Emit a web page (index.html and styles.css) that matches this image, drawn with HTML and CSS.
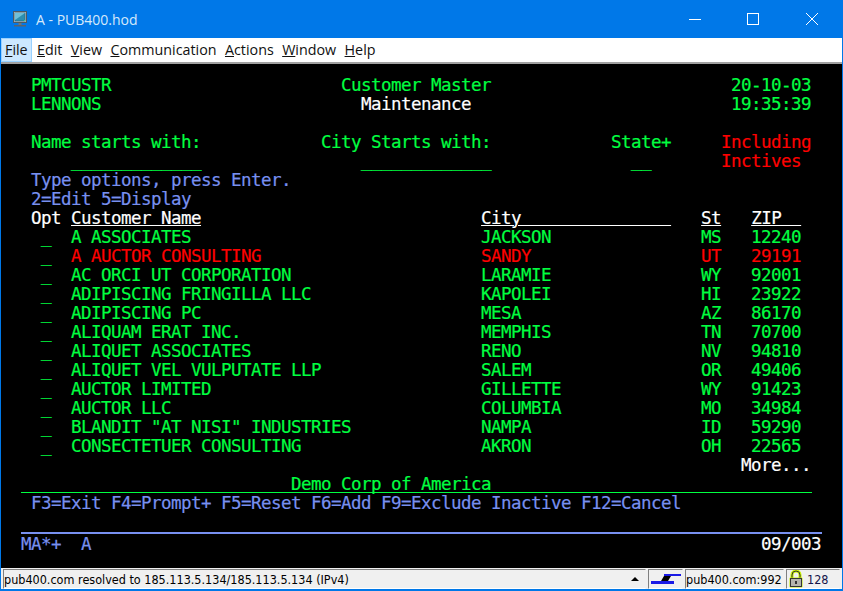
FILE: index.html
```html
<!DOCTYPE html>
<html lang="en">
  <head>
    <meta charset="UTF-8" />
    <title>A - PUB400.hod</title>
    <link rel="stylesheet" href="styles.css">
  </head>
  <body>
    <div class="window">
      <div class="titlebar">
        <svg class="app-icon" width="16" height="16" viewBox="0 0 16 16">
          <rect x="1.500" y="0.500" width="13" height="11" fill="#a9b4ba" stroke="#4d5a63" />
          <rect x="3" y="2" width="10" height="8" fill="#2d8fb0" stroke="#1d5f78" stroke-width="0.5" />
          <path d="M3 2h10L3 9z" fill="#6fc0d8" />
          <rect x="12" y="9" width="1" height="1" fill="#3fe070" />
          <rect x="6.500" y="12" width="3" height="2" fill="#6d777e" />
          <rect x="2" y="14" width="12" height="1.500" fill="#59646c" />
        </svg>
        <span class="title">A - PUB400.hod</span>
        <div class="win-btns">
          <svg class="win-btn" width="12" height="12" viewBox="0 0 12 12"><path d="M0 6.500h12" stroke="#fff" fill="none" /></svg>
          <svg class="win-btn max" width="12" height="12" viewBox="0 0 12 12"><rect x="0.500" y="0.500" width="11" height="11" stroke="#fff" fill="none" /></svg>
          <svg class="win-btn" width="12" height="12" viewBox="0 0 12 12"><path d="M0 0l12 12M12 0L0 12" stroke="#fff" fill="none" /></svg>
        </div>
      </div>

      <ul class="menubar">
        <li class="menu selected"><u>F</u>ile</li>
        <li class="menu"><u>E</u>dit</li>
        <li class="menu"><u>V</u>iew</li>
        <li class="menu"><u>C</u>ommunication</li>
        <li class="menu"><u>A</u>ctions</li>
        <li class="menu"><u>W</u>indow</li>
        <li class="menu"><u>H</u>elp</li>
      </ul>

      <div class="screen">
<pre class="term"><span class="g"> PMTCUSTR                       Customer Master                        20-10-03</span>
<span class="g"> LENNONS</span>                          <span class="w">Maintenance</span>                          <span class="g">19:35:39</span>

<span class="g"> Name starts with:            City Starts with:            State+</span>     <span class="r">Including</span>
<span class="g">     <span class="fld">_____________</span>                <span class="fld">_____________</span>              <span class="fld">__</span></span>       <span class="r">Inctives</span>
<span class="b"> Type options, press Enter.</span>
<span class="b"> 2=Edit 5=Display</span>
<span class="w"> Opt <u>Customer Name</u>                            <u>City               </u>   <u>St</u>   <u>ZIP  </u></span>
<span class="g">  <span class="fld">_</span>  A ASSOCIATES                             JACKSON               MS   12240</span>
<span class="g">  <span class="fld">_</span>  </span><span class="r">A AUCTOR CONSULTING                      SANDY                 UT   29191</span>
<span class="g">  <span class="fld">_</span>  AC ORCI UT CORPORATION                   LARAMIE               WY   92001</span>
<span class="g">  <span class="fld">_</span>  ADIPISCING FRINGILLA LLC                 KAPOLEI               HI   23922</span>
<span class="g">  <span class="fld">_</span>  ADIPISCING PC                            MESA                  AZ   86170</span>
<span class="g">  <span class="fld">_</span>  ALIQUAM ERAT INC.                        MEMPHIS               TN   70700</span>
<span class="g">  <span class="fld">_</span>  ALIQUET ASSOCIATES                       RENO                  NV   94810</span>
<span class="g">  <span class="fld">_</span>  ALIQUET VEL VULPUTATE LLP                SALEM                 OR   49406</span>
<span class="g">  <span class="fld">_</span>  AUCTOR LIMITED                           GILLETTE              WY   91423</span>
<span class="g">  <span class="fld">_</span>  AUCTOR LLC                               COLUMBIA              MO   34984</span>
<span class="g">  <span class="fld">_</span>  BLANDIT "AT NISI" INDUSTRIES             NAMPA                 ID   59290</span>
<span class="g">  <span class="fld">_</span>  CONSECTETUER CONSULTING                  AKRON                 OH   22565</span>
<span class="w">                                                                        More...</span>
<span class="g">                           Demo Corp of America</span></pre>
<pre class="term keys"><span class="b"> F3=Exit F4=Prompt+ F5=Reset F6=Add F9=Exclude Inactive F12=Cancel</span></pre>
<pre class="term oia"><span class="b">MA*+  A</span>                                                                   <span class="w">09/003</span></pre>
      </div>

      <div class="statusbar">
        <div class="panel msg">pub400.com resolved to 185.113.5.134/185.113.5.134 (IPv4)<span class="arrow"></span></div>
        <div class="panel conn">
          <svg width="30" height="10" viewBox="0 0 30 10">
            <path d="M13 2h7l-3 5h-7z" fill="#000" />
            <rect x="13" y="0" width="17" height="2" fill="#1a1ae6" />
            <rect x="0" y="7" width="23" height="3" fill="#1a1ae6" />
          </svg>
        </div>
        <div class="panel host">pub400.com:992</div>
        <div class="panel lock">
          <svg width="14" height="18" viewBox="0 0 14 18">
            <path d="M3 8V5a4 4 0 0 1 8 0v3" fill="none" stroke="#c8f000" stroke-width="3" />
            <path d="M3 8V5a4 4 0 0 1 8 0v3" fill="none" stroke="#333" />
            <rect x="0.500" y="7.500" width="13" height="10" rx="1" fill="#c8f000" />
            <rect x="1.500" y="8.500" width="11" height="8" fill="#b4b4ae" stroke="#333" />
            <path d="M7 11v3" stroke="#333" stroke-width="2" />
          </svg>
          <span class="bits">128</span>
        </div>
      </div>
    </div>
  </body>
</html>
```

FILE: styles.css
```css
* {
  box-sizing: border-box;
}

html,
body {
  margin: 0;
  height: 100%;
}

.window {
  display: flex;
  flex-direction: column;
  width: 843px;
  height: 591px;
  overflow: hidden;
  background: #0078e8;
  padding: 0 1px 2px 1px;
}

.titlebar {
  display: flex;
  align-items: center;
  flex: 0 0 38px;
  padding-left: 11px;
  color: #d5e9fb;
  font-family: "Open Sans", "Noto Sans", sans-serif;
  font-size: 14px;
}

.app-icon {
  margin-right: 8px;
}

.win-btns {
  display: flex;
  margin-left: auto;
  gap: 46px;
  padding-right: 24px;
}

.max {
  margin-right: 1px;
}

.menubar {
  display: flex;
  flex: 0 0 24px;
  align-items: center;
  margin: 0;
  padding: 0;
  list-style-type: none;
  background: #fff;
  font-family: "Open Sans", "Noto Sans", sans-serif;
  font-size: 14.300px;
  color: #111;
}

.menu {
  padding: 2px 4px 2px 4.400px;
  height: 24px;
  line-height: 20px;
}

.selected {
  background: #cce8ff;
  border: 1px solid #99d1ff;
  padding: 1px 3px;
  margin-right: 1px;
}

.screen {
  flex: 1;
  background: #000;
  border-top: 2px solid #a0a0a0;
  padding: 12px 0 0 20px;
}

.term {
  margin: 0;
  font-family: "DejaVu Sans Mono", monospace;
  font-size: 17.500px;
  letter-spacing: -0.535px;
  line-height: 19px;
  -webkit-text-stroke: 0.2px;
}

.term u {
  text-underline-offset: 1px;
  text-decoration-thickness: 1px;
}

.fld {
  -webkit-text-stroke: 0.3px #00ff40;
}

.keys {
  width: 791px;
  border-top: 1px solid #00ff40;
  margin-top: -2px;
  padding-top: 1px;
}

.oia {
  width: 801px;
  margin-top: 19px;
  padding-top: 1px;
  border-top: 2px solid #7890f0;
}

.g {
  color: #00ff40;
}

.b {
  color: #7890f0;
}

.r {
  color: #ff0000;
}

.w {
  color: #fff;
}

.statusbar {
  display: flex;
  flex: 0 0 21px;
  gap: 2px;
  background: #f0f0f0;
  padding: 1px 2px 0 2px;
  font-family: "DejaVu Sans", sans-serif;
  font-size: 12.500px;
  font-stretch: condensed;
  color: #000;
}

.panel {
  display: flex;
  align-items: center;
  height: 20px;
  border: 1px solid;
  border-color: #808080 #f0f0f0 #fff #808080;
  white-space: nowrap;
  background: #f0f0f0;
}

.msg {
  flex: 1;
}

.arrow {
  margin-left: auto;
  margin-right: 6px;
  width: 0;
  height: 0;
  border-left: 4px solid transparent;
  border-right: 4px solid transparent;
  border-bottom: 4px solid #000;
}

.conn {
  flex: 0 0 35px;
  justify-content: center;
}

.host {
  flex: 0 0 99px;
}

.lock {
  flex: 0 0 54px;
  gap: 4px;
  padding-left: 2px;
}

.bits {
  color: #14144a;
}
```
